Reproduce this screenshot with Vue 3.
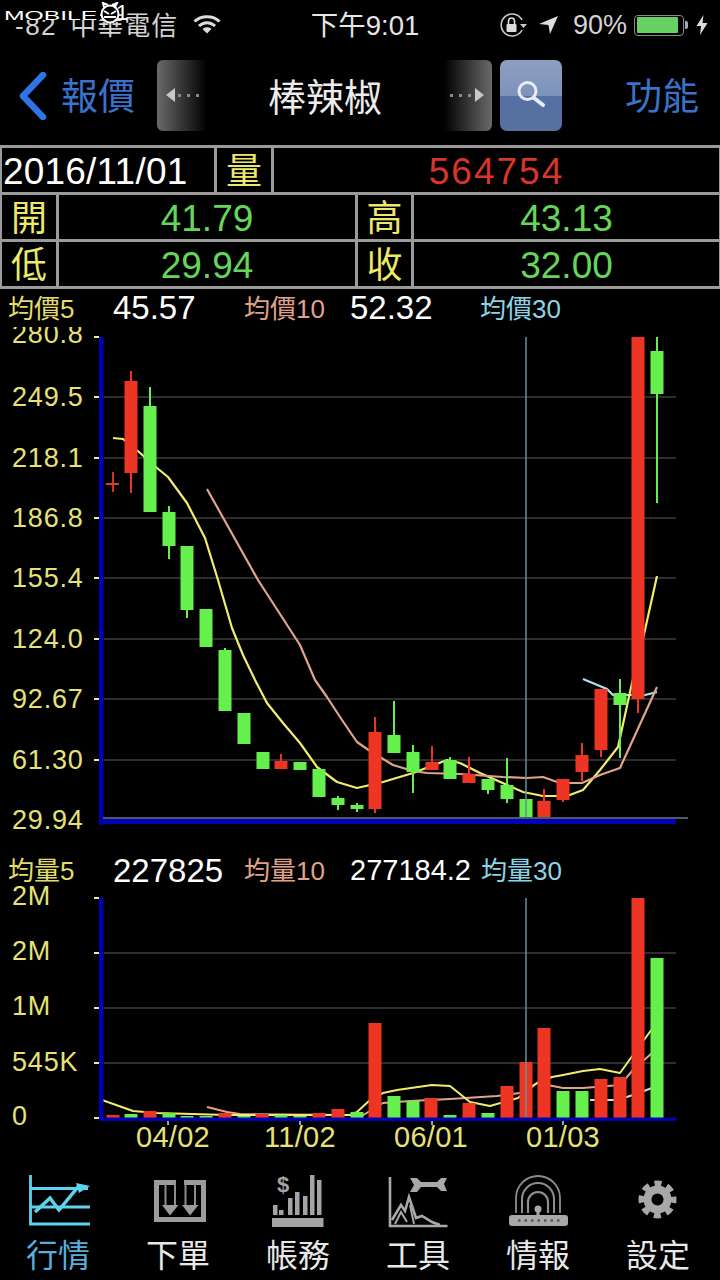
<script setup>
const R = '#ee3524'
const G = '#66f04e'
const candles = [
  [131,381,473,371,493,R],[150,406,512,387,512,G],[169,512,546,506,559,G],[187,546,610,546,618,G],
  [206,609,647,609,647,G],[225,650,711,648,711,G],[244,713,744,713,744,G],[263,752,769,752,769,G],
  [281,761,769,754,769,R],[300,762,770,762,770,G],[319,769,797,769,797,G],[338,798,805,796,810,G],
  [357,805,809,803,812,G],[375,732,809,717,813,R],[394,735,753,701,753,G],[413,752,772,745,793,G],
  [432,762,770,746,770,R],[450,760,779,757,779,G],[469,774,783,757,783,R],[488,779,790,779,794,G],
  [507,785,799,758,803,G],[526,799,818,799,818,G],[544,801,818,789,818,R],[563,779,800,779,802,R],
  [582,755,772,743,781,R],[601,689,750,689,757,R],[620,693,705,679,758,G],[638,337,699,337,713,R],
  [657,351,394,337,503,G]
]
const vols = [
  [113,1115,R],[131,1114,G],[150,1111,R],[169,1113,G],[187,1116,G],[206,1116,G],[225,1113,R],[244,1116,G],
  [262,1114,R],[281,1115,G],[300,1116,G],[319,1113,R],[338,1109,R],[357,1112,G],[375,1023,R],[394,1096,G],
  [413,1101,G],[431,1098,R],[450,1115,G],[469,1103,R],[488,1113,G],[507,1086,R],[526,1062,R],[544,1028,R],
  [563,1091,G],[582,1091,G],[601,1079,R],[620,1077,R],[638,898,R],[657,958,G]
]
const ma5 = '113,438 123,439 139,452 157,468 168,477 187,503 205,538 218,580 232,628 243,655 255,680 267,703 283,723 300,743 317,767 337,782 357,788 383,782 413,773 447,760 460,763 480,773 523,792 543,796 567,796 583,790 600,770 618,747 632,683 645,630 657,576'
const ma10 = '207,489 258,580 300,645 315,680 327,697 340,717 357,742 370,751 393,765 413,771 427,773 460,774 503,777 527,778 543,777 560,783 582,783 600,775 620,768 657,687'
const ma30 = '583,679 607,689 613,695 645,695 657,692'
const vma5 = '102,1100 133,1111 157,1113 227,1115 350,1115 357,1112 370,1100 383,1093 397,1090 432,1085 450,1086 470,1102 490,1106 518,1098 537,1083 552,1077 563,1075 583,1071 600,1069 620,1073 633,1055 652,1029'
const vma10 = '207,1107 227,1112 240,1114 350,1115 360,1117 383,1103 410,1101 450,1099 497,1096 520,1093 537,1083 563,1088 583,1088 620,1085 633,1070 652,1053'
const vma30 = '590,1100 617,1100 633,1095 652,1088'
const yLabels = [['280.8',334,null],['249.5',397,397],['218.1',458,458],['186.8',518,518],['155.4',578,578],['124.0',639,639],['92.67',699,699],['61.30',760,760],['29.94',820,820]]
const vLabels = [['2M',896,898],['2M',951,953],['1M',1006,1008],['545K',1062,1063],['0',1116,1118]]
const xLabels = [['04/02',173,168],['11/02',300,300],['06/01',431,432],['01/03',563,563]]
const tabs = ['行情','下單','帳務','工具','情報','設定']
const finBars = [[273,1205],[279,1210],[288,1198],[295,1192],[303,1196],[310,1175],[317,1180]]
</script>

<template>
  <div class="page">
    <div class="watermark">
      <span class="wm-text"><span class="wm-inner">MOBILE</span></span>
      <svg class="wm-face" width="20" height="22" viewBox="0 0 20 22">
        <path d="M4 5 L3 1 L8 3 M15 5 L17 1 L12 3" fill="none" stroke="#fff" stroke-width="2" />
        <circle cx="10" cy="12" r="8.500" fill="#000" stroke="#fff" stroke-width="2" />
        <path d="M4 9 L9 12 M16 9 L11 12 M4 15 H16" stroke="#fff" stroke-width="2" fill="none" />
      </svg>
      <span class="wm-one">1</span>
    </div>

    <div class="status">
      <div class="st-left">
        <span class="carrier"><span class="sig">-82</span> 中華電信</span>
        <svg width="28" height="20" viewBox="0 0 28 20" class="wifi">
          <path d="M1.500 7.500 C8 1 20 1 26.500 7.500 M6 12 C10.500 7.500 17.500 7.500 22 12" fill="none" stroke="#ddd" stroke-width="3" />
          <path d="M9.500 15 C12 12.500 16 12.500 18.500 15 L14 19.500 Z" fill="#ddd" />
        </svg>
      </div>
      <div class="st-time">下午9:01</div>
      <div class="st-right">
        <svg width="28" height="26" viewBox="0 0 28 26">
          <path d="M23 18 A11 11 0 1 1 23 8" fill="none" stroke="#ccc" stroke-width="1.600" />
          <path d="M21 12 H28 L24.500 16 Z" fill="#ccc" />
          <rect x="7.500" y="12" width="10" height="8" rx="1" fill="#ddd" />
          <path d="M9.500 12 V9 A3 3 0 0 1 15.500 9 V12" fill="none" stroke="#ddd" stroke-width="1.600" />
        </svg>
        <svg class="loc" width="20" height="20" viewBox="0 0 20 20">
          <path d="M0 9 L19 1 L11 19 L9.500 10 Z" fill="#ddd" />
        </svg>
        <span class="pct">90%</span>
        <div class="battery"><div class="battery-fill"></div></div>
        <div class="nub"></div>
        <svg class="bolt" width="12" height="20" viewBox="0 0 12 20">
          <path d="M7.500 0 L0.500 11 H5 L4 20 L11.500 8 H6.500 Z" fill="#ddd" />
        </svg>
      </div>
    </div>

    <div class="nav">
      <svg class="chev" width="30" height="48" viewBox="0 0 30 48">
        <path d="M25 3 L5 24 L25 45" fill="none" stroke="#2f74e6" stroke-width="6.500" stroke-linecap="round" stroke-linejoin="round" />
      </svg>
      <span class="nav-link back-label">報價</span>
      <div class="pager left">
        <i class="tri tri-l"></i><i class="dots"></i>
      </div>
      <div class="title">棒辣椒</div>
      <div class="pager right">
        <i class="dots"></i><i class="tri tri-r"></i>
      </div>
      <div class="search">
        <svg width="34" height="34" viewBox="0 0 34 34">
          <circle cx="13.500" cy="13" r="8.500" fill="none" stroke="#e8edf5" stroke-width="3" />
          <path d="M20 20 L29 27" stroke="#e8edf5" stroke-width="4" stroke-linecap="round" />
        </svg>
      </div>
      <span class="nav-link func">功能</span>
    </div>

    <div class="table">
      <div class="tr tr1">
        <div class="td date">2016/11/01</div>
        <div class="td key">量</div>
        <div class="td val red wide">564754</div>
      </div>
      <div class="tr tr2">
        <div class="td key">開</div>
        <div class="td val">41.79</div>
        <div class="td key">高</div>
        <div class="td val">43.13</div>
      </div>
      <div class="tr tr2">
        <div class="td key">低</div>
        <div class="td val">29.94</div>
        <div class="td key">收</div>
        <div class="td val">32.00</div>
      </div>
    </div>

    <div class="ma-row">
      <span class="ma c5 m1">均價5</span>
      <span class="num n1">45.57</span>
      <span class="ma c10 m2">均價10</span>
      <span class="num n2">52.32</span>
      <span class="ma c30">均價30</span>
    </div>

    <svg class="main-chart" width="720" height="503" viewBox="0 327 720 503">
      <g v-for="l in yLabels" :key="l[0]">
        <text class="axis-text" x="12" :y="l[1] + 9">{{ l[0] }}</text>
        <template v-if="l[2] && l[2] !== 820">
          <line x1="104" x2="676" :y1="l[2]" :y2="l[2]" stroke="#3c3c3c" stroke-width="1.500" />
          <line x1="94" x2="99" :y1="l[2]" :y2="l[2]" stroke="#f0ea90" stroke-width="2" />
        </template>
      </g>
      <line x1="94" x2="99" y1="337" y2="337" stroke="#f0ea90" stroke-width="2" />
      <path d="M113 472 V492 M106 484 H119" stroke="#e23a2a" stroke-width="1.800" fill="none" />
      <polyline :points="ma30" class="ln" stroke="#a8e4f2" />
      <polyline :points="ma5" class="ln" stroke="#f2ec6c" />
      <polyline :points="ma10" class="ln" stroke="#e0a48c" />
      <g v-for="c in candles" :key="c[0]">
        <line :x1="c[0]" :x2="c[0]" :y1="c[3]" :y2="c[4]" :stroke="c[5]" stroke-width="2" />
        <rect :x="c[0] - 6.500" :y="c[1]" width="13" :height="c[2] - c[1]" :fill="c[5]" />
      </g>
      <line x1="526" x2="526" y1="337" y2="822" stroke="#64909a" stroke-width="1.500" />
      <rect x="99" y="337" width="4.500" height="488" fill="#0000b4" />
      <rect x="103" y="817" width="585" height="2" fill="#4a5a68" />
      <rect x="99" y="819" width="577" height="5" fill="#0000b4" />
    </svg>

    <div class="ma-row vol-row">
      <span class="ma c5 m1">均量5</span>
      <span class="num n1">227825</span>
      <span class="ma c10 m2">均量10</span>
      <span class="num n3">277184.2</span>
      <span class="ma c30">均量30</span>
    </div>

    <svg class="vol-chart" width="720" height="269" viewBox="0 886 720 269">
      <g v-for="l in vLabels" :key="l[1]">
        <text class="axis-text" x="12" :y="l[1] + 9">{{ l[0] }}</text>
        <line x1="94" x2="99" :y1="l[2]" :y2="l[2]" stroke="#f0ea90" stroke-width="2" />
        <line v-if="l[2] !== 898 && l[2] !== 1118" x1="104" x2="676" :y1="l[2]" :y2="l[2]" stroke="#3c3c3c" stroke-width="1.500" />
      </g>
      <polyline :points="vma30" class="ln2" stroke="#c8dce4" />
      <polyline :points="vma10" class="ln2" stroke="#e0a48c" />
      <polyline :points="vma5" class="ln2" stroke="#f2ec6c" />
      <rect v-for="b in vols" :key="b[0]" :x="b[0] - 6.500" :y="b[1]" width="13" :height="1118 - b[1]" :fill="b[2]" />
      <line x1="526" x2="526" y1="898" y2="1120" stroke="#64909a" stroke-width="1.500" />
      <rect x="99" y="898" width="4.500" height="223" fill="#0000b4" />
      <rect x="99" y="1117.500" width="577" height="3.500" fill="#0000b4" />
      <g v-for="x in xLabels" :key="x[0]">
        <line :x1="x[2]" :x2="x[2]" y1="1121" y2="1125" stroke="#c8d8f0" stroke-width="1.500" />
        <text class="axis-text x-text" :x="x[1]" y="1147" text-anchor="middle">{{ x[0] }}</text>
      </g>
    </svg>

    <div class="tabs">
      <div class="tab active">
        <svg class="tab-ico" width="80" height="60" viewBox="18 1172 80 60">
          <g fill="none" stroke="#5dd4ee" stroke-width="2.800">
            <path d="M30.500 1175 V1224 H90" />
            <path d="M31 1188.500 H88 M31 1207 H90" />
            <path d="M35 1212 L50 1198 L59 1210 L78 1187 H86" stroke-width="3.500" />
          </g>
          <path d="M76 1183 L90 1186 L79 1193 Z" fill="#5dd4ee" />
        </svg>
        <span>{{ tabs[0] }}</span>
      </div>
      <div class="tab">
        <svg class="tab-ico" width="80" height="60" viewBox="138 1172 80 60">
          <path d="M176 1182.500 H156.500 V1219.500 H203.500 V1182.500 H184" fill="none" stroke="#9c9c9c" stroke-width="5" />
          <path d="M165.500 1183 V1205 M175 1183 V1205 M185.500 1183 V1205 M195 1183 V1205" stroke="#8c8c8c" stroke-width="2" />
          <path d="M162 1205 H178.500 L170 1215.500 Z M182 1205 H198.500 L190 1215.500 Z" fill="#9c9c9c" />
        </svg>
        <span>{{ tabs[1] }}</span>
      </div>
      <div class="tab">
        <svg class="tab-ico" width="80" height="60" viewBox="258 1172 80 60">
          <text x="283" y="1192" class="dollar" text-anchor="middle">$</text>
          <rect v-for="b in finBars" :key="b[0]" :x="b[0]" :y="b[1]" width="4.500" :height="1215 - b[1]" fill="#a4a4a6" />
          <rect x="272" y="1218" width="51.500" height="9" fill="#a4a4a6" />
        </svg>
        <span>{{ tabs[2] }}</span>
      </div>
      <div class="tab">
        <svg class="tab-ico" width="80" height="60" viewBox="378 1172 80 60">
          <path d="M390 1177 V1226 H447.500" fill="none" stroke="#a8a8aa" stroke-width="2.600" />
          <path d="M392 1220 L401 1205 L405 1211 L409 1197 L416 1218 L422 1216 L432 1222 L440 1225" fill="none" stroke="#a8a8aa" stroke-width="2.600" />
          <path d="M395 1224 L401 1212 L407 1222 M410 1205 L414 1224" fill="none" stroke="#a8a8aa" stroke-width="2" />
          <path d="M410 1178 H417 L421 1182 H437 L441 1178 H447 L444 1184 L447 1191 H441 L437 1187 H421 L417 1192 H410 L414 1185 Z" fill="#a8a8aa" />
        </svg>
        <span>{{ tabs[3] }}</span>
      </div>
      <div class="tab">
        <svg class="tab-ico" width="80" height="60" viewBox="498 1172 80 60">
          <g fill="none" stroke="#8e8e90">
            <path d="M516 1213 V1198 A22 22 0 0 1 560 1198 V1213" stroke-width="1.800" />
            <path d="M522 1213 V1199 A16 16 0 0 1 554 1199 V1213" stroke-width="2" />
            <path d="M528 1213 V1202 A10 10 0 0 1 548 1202 V1213" stroke-width="2.200" />
          </g>
          <circle cx="538" cy="1209" r="3.500" fill="#a8a8aa" />
          <rect x="536.500" y="1209" width="3" height="7" fill="#a8a8aa" />
          <rect x="509" y="1215" width="59" height="11" rx="3" fill="#a8a8aa" />
          <path d="M518 1220.500 H560" stroke="#555" stroke-width="2.500" stroke-dasharray="2.500 4" />
        </svg>
        <span>{{ tabs[4] }}</span>
      </div>
      <div class="tab">
        <svg class="tab-ico" width="80" height="60" viewBox="618 1172 80 60">
          <circle cx="657.500" cy="1199.500" r="14" fill="#a8a8aa" />
          <circle cx="657.500" cy="1199.500" r="16" fill="none" stroke="#a8a8aa" stroke-width="6" stroke-dasharray="7 5.566" stroke-dashoffset="3.500" />
          <circle cx="657.500" cy="1199.500" r="6" fill="#000" />
        </svg>
        <span>{{ tabs[5] }}</span>
      </div>
    </div>
  </div>
</template>

<style>
html, body { margin: 0; background: #000; }
</style>

<style scoped>
.page {
  position: relative;
  width: 720px;
  height: 1280px;
  overflow: hidden;
  background: #000;
  font-family: "Liberation Sans", "Noto Sans CJK TC", sans-serif;
  color: #fff;
}
.watermark {
  position: absolute;
  left: 4px;
  top: 2px;
  display: flex;
  align-items: center;
  height: 22px;
  z-index: 2;
}
.wm-text {
  display: block;
  width: 96px;
  height: 14px;
  background: #000;
  white-space: nowrap;
  overflow: hidden;
}
.wm-inner {
  display: inline-block;
  font-size: 13px;
  line-height: 14px;
  color: #fff;
  transform: scaleX(1.9);
  transform-origin: left center;
}
.wm-one {
  font-size: 22px;
  line-height: 22px;
  margin-left: -4px;
}
.status {
  display: grid;
  grid-template-columns: 310px 110px 1fr;
  align-items: center;
  height: 50px;
  color: #d4d4d4;
  font-size: 26px;
}
.st-left {
  display: flex;
  align-items: center;
  gap: 15px;
  padding-left: 15px;
  white-space: nowrap;
}
.carrier { word-spacing: 5px; letter-spacing: 1px; margin-top: -4px; }
.sig { letter-spacing: 1.500px; }
.wifi { margin-top: -2px; }
.st-time {
  font-size: 27.500px;
  color: #e6e6e6;
  white-space: nowrap;
  text-align: center;
  margin-top: -4px;
}
.st-right {
  display: flex;
  align-items: center;
  justify-content: flex-end;
  padding-right: 12px;
}
.loc { margin-left: 12px; }
.pct { margin-left: 14px; font-size: 27px; }
.battery {
  width: 50px;
  height: 21px;
  box-sizing: border-box;
  margin-left: 7px;
  border: 1.500px solid #8a8a8a;
  border-radius: 4px;
  padding: 1.500px 5px 1.500px 1.500px;
}
.battery-fill {
  height: 100%;
  background: #66d162;
  border-radius: 1px;
}
.nub {
  width: 3px;
  height: 8px;
  margin-left: 1px;
  background: #aaa;
  border-radius: 0 2px 2px 0;
}
.bolt { margin-left: 8px; }
.nav {
  display: flex;
  align-items: center;
  height: 95px;
  padding-left: 18px;
}
.chev { flex: none; margin-top: -4px; }
.nav-link {
  font-size: 37px;
  line-height: 37px;
  color: #3a72cc;
  white-space: nowrap;
}
.back-label { margin-left: 13px; }
.pager {
  flex: none;
  display: flex;
  align-items: center;
  width: 50px;
  height: 71px;
  box-sizing: border-box;
  margin-top: -5px;
  gap: 3px;
}
.pager.left {
  margin-left: 22px;
  padding-left: 9px;
  border-radius: 6px 0 0 6px;
  background: linear-gradient(90deg, #6a6a6a, #000);
}
.pager.right {
  width: 48px;
  justify-content: flex-end;
  padding-right: 8px;
  border-radius: 0 6px 6px 0;
  background: linear-gradient(270deg, #6a6a6a, #000);
}
.tri { display: block; width: 0; height: 0; border-style: solid; }
.tri-l { border-width: 7px 9px 7px 0; border-color: transparent #c8c8c8 transparent transparent; }
.tri-r { border-width: 7px 0 7px 9px; border-color: transparent transparent transparent #c8c8c8; }
.dots {
  display: block;
  width: 22px;
  height: 3px;
  background: repeating-linear-gradient(90deg, #8a8a8a 0 3px, transparent 3px 9px);
}
.title {
  flex: none;
  width: 237px;
  text-align: center;
  font-size: 38px;
  line-height: 38px;
  color: #ececec;
  padding-right: 1px;
  box-sizing: border-box;
}
.search {
  flex: none;
  display: flex;
  align-items: center;
  justify-content: center;
  width: 62px;
  height: 71px;
  margin-left: 8px;
  margin-top: -5px;
  border-radius: 7px;
  background: linear-gradient(180deg, #8c9fc2 0, #7e93ba 50%, #5670a6 50%, #56709f 100%);
}
.func { margin-left: 63px; }
.table {
  display: flex;
  flex-direction: column;
  gap: 3px;
  height: 144px;
  box-sizing: border-box;
  padding: 3px 1px 3px 2px;
  background: #9a9a9a;
}
.tr { display: grid; grid-template-rows: 44px; height: 44px; gap: 3px; }
.tr1 { grid-template-columns: 212px 54px 1fr; }
.tr2 { grid-template-columns: 54px 296px 53px 1fr; }
.td {
  display: flex;
  align-items: center;
  justify-content: center;
  box-sizing: border-box;
  padding-top: 3px;
  min-height: 0;
  overflow: hidden;
  background: #000;
  font-size: 37px;
  line-height: 40px;
  white-space: nowrap;
}
.date { justify-content: flex-start; padding-left: 1px; color: #fff; letter-spacing: 0.200px; }
.key { color: #ece86c; font-size: 36px; }
.val { color: #66d65a; }
.red { color: #d8352a; }
.wide { letter-spacing: 2px; }
.ma-row {
  display: flex;
  align-items: center;
  height: 38px;
  padding-left: 8px;
  box-sizing: border-box;
  white-space: nowrap;
}
.vol-row {
  height: 36px;
  margin-top: 20px;
  padding-top: 5px;
}
.ma { font-size: 26px; line-height: 26px; margin-top: 1px; }
.c5 { color: #e2dc6a; }
.c10 { color: #e0a288; }
.c30 { color: #8cd4e4; }
.num { font-size: 33px; color: #fff; }
.m1 { width: 105px; flex: none; }
.n1 { width: 131px; flex: none; }
.m2 { width: 106px; flex: none; }
.n2 { width: 130px; flex: none; }
.n3 { width: 131px; flex: none; font-size: 29px; }
.main-chart, .vol-chart { display: block; }
.axis-text {
  font-family: "Liberation Sans", sans-serif;
  font-size: 27px;
  letter-spacing: 0.800px;
  fill: #e6e278;
}
.x-text { font-size: 29px; letter-spacing: 0.300px; }
.ln { fill: none; stroke-width: 2.200; stroke-linejoin: round; }
.ln2 { fill: none; stroke-width: 2; stroke-linejoin: round; }
.dollar {
  font-family: "Liberation Sans", sans-serif;
  font-weight: 700;
  font-size: 22px;
  fill: #a4a4a6;
}
.tabs {
  display: grid;
  grid-template-columns: repeat(6, 120px);
  margin-left: -2px;
  width: 720px;
  height: 125px;
  font-size: 32px;
  color: #e8e8e8;
}
.tab {
  display: flex;
  flex-direction: column;
  align-items: center;
  padding-top: 17px;
}
.tab span { line-height: 42px; margin-top: 3px; white-space: nowrap; }
.active { color: #58aedc; }
</style>
